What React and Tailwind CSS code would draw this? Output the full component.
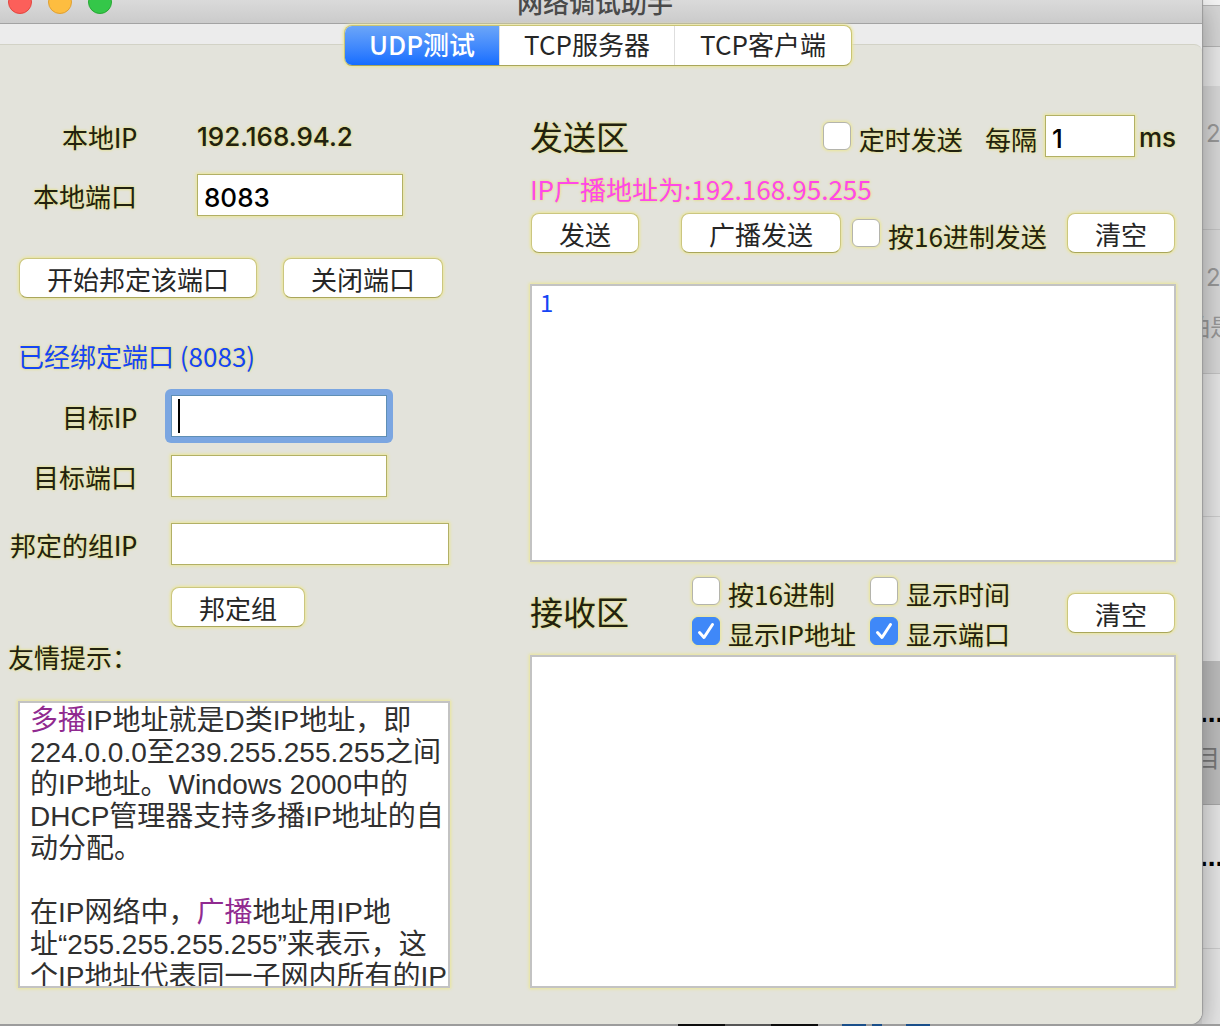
import { useState } from "react";

const FIELD =
  "h-[42px] border bg-white px-1.5 font-[Inter,'Noto_Sans_CJK_SC',sans-serif] text-[26px] font-medium text-black outline-none";
const GLOW = "shadow-[0_0_3px_1px_#ebe695]";
const TEXT_GLOW = "[text-shadow:0_0_3px_#e6df55]";

const TABS = [
  { id: "udp", title: "UDP测试", width: "w-[155px]" },
  { id: "server", title: "TCP服务器", width: "w-[175px]" },
  { id: "client", title: "TCP客户端", width: "w-[176px]" },
];

// White rounded push button
const PushButton = ({ children, className = "", ...rest }) => (
  <button
    type="button"
    className={`h-10 shrink-0 rounded-lg border border-[#cbc680] border-b-[#a9a65c] bg-white pt-0.5 text-[26px] leading-8 text-[#262626] ${GLOW} ${className}`}
    {...rest}
  >
    {children}
  </button>
);

const CheckBox = ({ id, label, checked, onChange }) => (
  <div className="flex h-7 items-center gap-2">
    <span className="relative size-7 shrink-0">
      <input
        id={id}
        type="checkbox"
        checked={checked}
        onChange={onChange}
        className={`peer block size-7 appearance-none rounded-md border border-[#b4b4ac] bg-white checked:border-[#3f88f8] checked:bg-[#3f88f8] ${GLOW}`}
      />
      <svg
        viewBox="0 0 28 28"
        className="pointer-events-none absolute inset-0 hidden size-7 peer-checked:block"
        fill="none"
        stroke="white"
        strokeWidth="3"
        strokeLinecap="round"
        strokeLinejoin="round"
      >
        <path d="M7.5 15.5 L12 20.5 L20.5 7.5" />
      </svg>
    </span>
    <label
      htmlFor={id}
      className={`pt-1.5 text-[26px] leading-8 whitespace-nowrap ${TEXT_GLOW}`}
    >
      {label}
    </label>
  </div>
);

const RowLabel = ({ htmlFor, children }) => (
  <label
    htmlFor={htmlFor}
    className={`w-[137px] shrink-0 pt-1 text-right font-[Lato,'Noto_Sans_CJK_SC',sans-serif] text-[26px] leading-8 whitespace-nowrap ${TEXT_GLOW}`}
  >
    {children}
  </label>
);

const TitleBar = () => (
  <header className="flex h-6 items-start overflow-hidden border-b border-[#a3a3a3] bg-linear-to-b from-[#dadada] to-[#cbcbcb]">
    <div className="-mt-2.5 ml-2 flex w-[104px] gap-4">
      <button
        type="button"
        aria-label="关闭"
        className="size-6 rounded-full border border-[#e2463f] bg-[#fc5f5a]"
      />
      <button
        type="button"
        aria-label="最小化"
        className="size-6 rounded-full border border-[#dfa033] bg-[#fdbd40]"
      />
      <button
        type="button"
        aria-label="缩放"
        className="size-6 rounded-full border border-[#27a833] bg-[#34c749]"
      />
    </div>
    <h1 className="-mt-3.5 flex-1 pr-[124px] text-center text-[26px] leading-8 font-medium text-[#4a4a4a]">
      网络调试助手
    </h1>
  </header>
);

// Slice of the mail list that shows behind the window
const BackgroundList = () => (
  <aside className="flex w-[18px] shrink-0 flex-col overflow-hidden bg-[#e6e6e6] text-[24px] leading-8 whitespace-nowrap text-[#999999]">
    <div className="h-[5px] bg-[#f4f4f4]" />
    <div className="h-[42px] border-y border-[#b5b5b5] bg-[#d6d6d6]" />
    <div className="h-[39px] bg-[#e9e9e9]" />
    <div className="h-[144px] border-b border-[#c4c4c4] bg-[#d8d8d8] pt-8 pl-1 font-[Inter]">
      2
    </div>
    <div className="h-36 border-b border-[#c4c4c4] bg-[#d8d8d8] pt-8 pl-1 font-[Inter]">
      2
      <p className="-ml-5 pt-4 font-['Noto_Sans_CJK_SC',sans-serif]">怕是</p>
    </div>
    <div className="h-[143px] border-b border-[#cdcdcd]" />
    <div className="h-36" />
    <div className="h-36 border-b border-[#a8a8a8] bg-[#bdbdbd] pt-9 text-[#777777]">
      <p className="-ml-0.5 font-['Liberation_Sans',sans-serif] text-[28px] font-bold text-black">
        ...
      </p>
      <p className="-ml-1.5 pt-3">目标</p>
    </div>
    <div className="h-36 border-b border-[#cdcdcd] pt-9">
      <p className="-ml-0.5 font-['Liberation_Sans',sans-serif] text-[28px] font-bold text-black">
        ...
      </p>
    </div>
  </aside>
);

const App = () => {
  const [tab, setTab] = useState("udp");
  const [form, setForm] = useState({
    localPort: "8083",
    targetIp: "",
    targetPort: "",
    groupIp: "",
    interval: "1",
    sendText: "1",
    recvText: "",
  });
  const [options, setOptions] = useState({
    timed: false,
    hexSend: false,
    hexRecv: false,
    showTime: false,
    showIp: true,
    showPort: true,
  });

  const handleChange = (e) => {
    const { name, value } = e.target;
    setForm({ ...form, [name]: value });
  };

  const toggle = (name) => setOptions({ ...options, [name]: !options[name] });

  return (
    <div className="flex min-h-screen flex-col bg-[#dcdcdc] font-['Noto_Sans_CJK_SC',sans-serif] text-[#22220f]">
      <div className="flex flex-1">
        <main className="relative z-10 flex min-w-0 flex-1 flex-col rounded-br-xl bg-[#ececec] shadow-[0_0_1px_1px_#9a9a9a,0_8px_30px_rgba(0,0,0,0.35)]">
          <TitleBar />

          {/* Tabs straddle the top edge of the panel */}
          <div
            role="tablist"
            className="relative flex h-5 justify-center pt-px pr-1.5"
          >
            <div
              className={`flex h-[41px] overflow-hidden rounded-lg border border-[#c9c475] border-b-[#a9a65c] bg-white ${GLOW}`}
            >
              {TABS.map((item) => (
                <button
                  key={item.id}
                  type="button"
                  role="tab"
                  aria-selected={tab === item.id}
                  onClick={() => setTab(item.id)}
                  className={`border-r border-[#dedede] pb-1 text-[26px] leading-8 last:border-r-0 ${
                    item.width
                  } ${
                    tab === item.id
                      ? "bg-linear-to-b from-[#6ba5f8] to-[#146dff] font-medium text-white"
                      : "text-[#262626]"
                  }`}
                >
                  {item.title}
                </button>
              ))}
            </div>
          </div>

          <section className="flex flex-1 gap-20 rounded-tr-lg rounded-br-xl border-t border-[#d2d2c6] bg-[#e3e3db] pt-[70px] pr-[26px] pb-9">
            {/* Left column: ports and addresses */}
            <div className="flex w-[450px] shrink-0 flex-col">
              <div className="flex h-[42px] items-center gap-[60px]">
                <RowLabel>本地IP</RowLabel>
                <span
                  className={`font-[Inter] text-[26px] font-medium ${TEXT_GLOW}`}
                >
                  192.168.94.2
                </span>
              </div>

              <div className="mt-[17px] flex items-center gap-[60px]">
                <RowLabel htmlFor="localPort">本地端口</RowLabel>
                <input
                  id="localPort"
                  name="localPort"
                  value={form.localPort}
                  onChange={handleChange}
                  className={`w-[206px] border-[#b2b066] pt-1 ${FIELD} ${GLOW}`}
                />
              </div>

              <div className="mt-[42px] ml-[19px] flex gap-[26px]">
                <PushButton className="w-[238px]">开始邦定该端口</PushButton>
                <PushButton className="w-40">关闭端口</PushButton>
              </div>

              <p
                className={`mt-[42px] ml-[18px] text-[26px] leading-8 text-[#1545f5] ${TEXT_GLOW}`}
              >
                已经绑定端口 (8083)
              </p>

              <div className="mt-[17px] flex items-center gap-7">
                <RowLabel htmlFor="targetIp">目标IP</RowLabel>
                {/* Focus ring */}
                <div className="relative rounded-md bg-[#7ba6e1] p-1.5">
                  <input
                    id="targetIp"
                    name="targetIp"
                    placeholder=" "
                    value={form.targetIp}
                    onChange={handleChange}
                    className={`peer block w-[216px] border-[#5f8fb5] ${FIELD}`}
                  />
                  <span className="pointer-events-none absolute top-2.5 left-[13px] hidden h-[34px] w-0.5 bg-black peer-placeholder-shown:block peer-focus:hidden" />
                </div>
              </div>

              <div className="mt-3 flex items-center gap-[34px]">
                <RowLabel htmlFor="targetPort">目标端口</RowLabel>
                <input
                  id="targetPort"
                  name="targetPort"
                  value={form.targetPort}
                  onChange={handleChange}
                  className={`w-[216px] border-[#b2b066] ${FIELD} ${GLOW}`}
                />
              </div>

              <div className="mt-[26px] flex items-center gap-[34px]">
                <RowLabel htmlFor="groupIp">邦定的组IP</RowLabel>
                <input
                  id="groupIp"
                  name="groupIp"
                  value={form.groupIp}
                  onChange={handleChange}
                  className={`w-[278px] border-[#b2b066] ${FIELD} ${GLOW}`}
                />
              </div>

              <PushButton className="mt-[22px] ml-[171px] w-[134px]">
                邦定组
              </PushButton>

              <h2 className={`mt-3.5 ml-2 text-[26px] leading-8 ${TEXT_GLOW}`}>
                友情提示：
              </h2>

              <div
                className={`mt-7 ml-[18px] h-[287px] overflow-hidden border-2 border-[#c3c3c3] bg-white pt-0.5 pl-2.5 font-['Liberation_Sans','Noto_Sans_CJK_SC',sans-serif] text-[28px] leading-8 whitespace-nowrap text-[#303030] ${GLOW}`}
              >
                <p>
                  <span className="text-[#902a90]">多播</span>
                  IP地址就是D类IP地址，即
                  <br />
                  224.0.0.0至239.255.255.255之间
                  <br />
                  的IP地址。Windows 2000中的
                  <br />
                  DHCP管理器支持多播IP地址的自
                  <br />
                  动分配。
                </p>
                <p className="mt-8">
                  在IP网络中，
                  <span className="text-[#902a90]">广播</span>
                  地址用IP地
                  <br />
                  址“255.255.255.255”来表示，这
                  <br />
                  个IP地址代表同一子网内所有的IP
                </p>
              </div>
            </div>

            {/* Right column: send and receive */}
            <div className="flex min-w-0 flex-1 flex-col">
              <div className="flex h-[42px] items-center">
                <h2 className={`text-[33px] leading-10 ${TEXT_GLOW}`}>
                  发送区
                </h2>
                <div className="ml-auto">
                  <CheckBox
                    id="timed"
                    label="定时发送"
                    checked={options.timed}
                    onChange={() => toggle("timed")}
                  />
                </div>
                <label
                  htmlFor="interval"
                  className={`ml-[22px] pt-1.5 text-[26px] leading-8 ${TEXT_GLOW}`}
                >
                  每隔
                </label>
                <input
                  id="interval"
                  name="interval"
                  value={form.interval}
                  onChange={handleChange}
                  className={`ml-2 w-[90px] border-[#b2b066] pt-1 ${FIELD} ${GLOW}`}
                />
                <span
                  className={`ml-1 pt-1 font-[Inter] text-[26px] leading-8 font-medium ${TEXT_GLOW}`}
                >
                  ms
                </span>
              </div>

              <p
                className={`mt-4 text-[26px] leading-8 text-[#ff48e8] ${TEXT_GLOW}`}
              >
                IP广播地址为:192.168.95.255
              </p>

              <div className="mt-2 flex items-center px-px">
                <PushButton className="w-[108px]">发送</PushButton>
                <PushButton className="mr-[11px] ml-[42px] w-40">
                  广播发送
                </PushButton>
                <CheckBox
                  id="hexSend"
                  label="按16进制发送"
                  checked={options.hexSend}
                  onChange={() => toggle("hexSend")}
                />
                <PushButton className="ml-auto w-[108px]">清空</PushButton>
              </div>

              <textarea
                name="sendText"
                aria-label="发送区"
                value={form.sendText}
                onChange={handleChange}
                className={`mt-[31px] h-[278px] w-full resize-none border-2 border-[#c3c3c3] bg-white px-2 text-[24px] leading-8 text-[#1545f5] outline-none ${GLOW}`}
              />

              <div className="mt-[15px] flex h-[68px] items-center pr-px">
                <h2 className={`w-[162px] text-[33px] leading-10 ${TEXT_GLOW}`}>
                  接收区
                </h2>
                <div className="grid grid-cols-[178px_auto] gap-y-3">
                  <CheckBox
                    id="hexRecv"
                    label="按16进制"
                    checked={options.hexRecv}
                    onChange={() => toggle("hexRecv")}
                  />
                  <CheckBox
                    id="showTime"
                    label="显示时间"
                    checked={options.showTime}
                    onChange={() => toggle("showTime")}
                  />
                  <CheckBox
                    id="showIp"
                    label="显示IP地址"
                    checked={options.showIp}
                    onChange={() => toggle("showIp")}
                  />
                  <CheckBox
                    id="showPort"
                    label="显示端口"
                    checked={options.showPort}
                    onChange={() => toggle("showPort")}
                  />
                </div>
                <PushButton className="mt-1 ml-auto w-[108px]">清空</PushButton>
              </div>

              <textarea
                name="recvText"
                aria-label="接收区"
                value={form.recvText}
                onChange={handleChange}
                className={`mt-2.5 min-h-40 w-full flex-1 resize-none border-2 border-[#c3c3c3] bg-white px-2 text-[24px] leading-8 text-[#1545f5] outline-none ${GLOW}`}
              />
            </div>
          </section>
        </main>

        <BackgroundList />
      </div>

      {/* Sliver of the desktop below the window */}
      <footer className="relative z-20 flex h-0.5 bg-[#9c9c9c] pl-[678px]">
        <span className="w-[47px] bg-[#0d0d0d]" />
        <span className="w-[46px] bg-[#555555]" />
        <span className="w-[47px] bg-[#0d0d0d]" />
        <span className="ml-6 w-6 bg-[#1a4f8a]" />
        <span className="ml-1.5 w-2.5 bg-[#1a4f8a]" />
        <span className="ml-6 w-6 bg-[#1a4f8a]" />
      </footer>
    </div>
  );
};

export default App;
